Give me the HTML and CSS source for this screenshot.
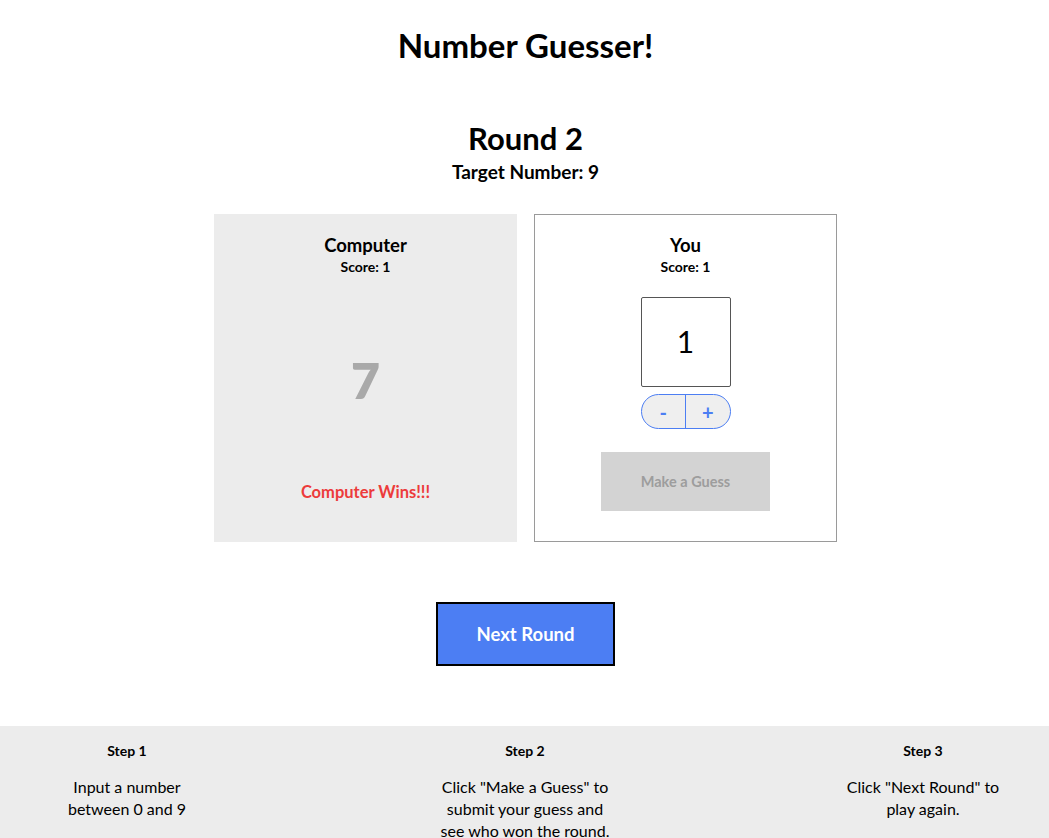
FILE: index.html
```html
<!DOCTYPE html>
<html lang="en">
<head>
<meta charset="utf-8">
<title>Number Guesser!</title>
<link rel="stylesheet" href="styles.css">
</head>
<body>
  <header class="site-header">
    <h1 class="title">Number Guesser!</h1>
  </header>
  <main class="game">
    <h2 class="round">Round 2</h2>
    <p class="target">Target Number: 9</p>
    <div class="cards">
      <section class="card card-computer">
        <h3 class="player">Computer</h3>
        <p class="score">Score: 1</p>
        <div class="computer-guess">7</div>
        <p class="result">Computer Wins!!!</p>
      </section>
      <section class="card card-human">
        <h3 class="player">You</h3>
        <p class="score">Score: 1</p>
        <input class="guess-input" type="text" value="1">
        <div class="stepper">
          <button class="stepper-btn">-</button>
          <button class="stepper-btn">+</button>
        </div>
        <button class="guess-btn" disabled>Make a Guess</button>
      </section>
    </div>
    <button class="next-btn">Next Round</button>
  </main>
  <footer class="steps">
    <div class="step">
      <h4 class="step-title">Step 1</h4>
      <p class="step-text">Input a number between 0 and 9</p>
    </div>
    <div class="step">
      <h4 class="step-title">Step 2</h4>
      <p class="step-text">Click "Make a Guess" to submit your guess and see who won the round.</p>
    </div>
    <div class="step">
      <h4 class="step-title">Step 3</h4>
      <p class="step-text">Click "Next Round" to play again.</p>
    </div>
  </footer>
</body>
</html>
```
FILE: styles.css
```css
* { box-sizing: border-box; }
body {
  margin: 0;
  font-family: Lato, "Noto Sans", sans-serif;
  color: #000;
  background: #fff;
}
.site-header { text-align: center; padding: 25px 0 0 2px; }
.title { margin: 0; font-size: 33px; line-height: 40px; font-weight: 700; }
.game { display: flex; flex-direction: column; align-items: center; padding-left: 2px; }
.round { margin: 55px 0 0; font-size: 31px; line-height: 36px; font-weight: 700; }
.target { margin: 4px 0 0; font-size: 19px; line-height: 24px; font-weight: 700; }
.cards { display: flex; gap: 17px; margin-top: 30px; }
.card {
  width: 303px;
  height: 328px;
  padding-top: 20px;
  display: flex;
  flex-direction: column;
  align-items: center;
}
.card-computer { background: #ececec; }
.card-human { background: #fff; border: 1px solid #9a9a9a; padding-top: 19px; }
.player { margin: 0; font-size: 18.5px; line-height: 22px; font-weight: 700; }
.score { margin: 3px 0 0; font-size: 14px; line-height: 16px; font-weight: 700; }
.computer-guess { margin-top: 75px; font-size: 50px; line-height: 60px; font-weight: 800; color: #a9a9a9; }
.result { margin: 72px 0 0; font-size: 16.5px; line-height: 20px; font-weight: 700; color: #ec3b3b; }
.guess-input {
  margin-top: 22px;
  width: 90px;
  height: 90px;
  border: 1px solid #555;
  border-radius: 2px;
  text-align: center;
  font-family: inherit;
  font-size: 30px;
  color: #000;
  padding: 0 0 3px;
  outline: none;
}
.stepper {
  margin-top: 7px;
  display: flex;
  width: 90px;
  height: 35px;
  border: 1px solid #4c7ef3;
  border-radius: 18px;
  overflow: hidden;
  background: #efefef;
}
.stepper-btn {
  flex: 1;
  border: none;
  background: transparent;
  color: #4c7ef3;
  font-family: inherit;
  font-size: 20px;
  font-weight: 700;
  padding: 0;
  line-height: 1;
}
.stepper-btn + .stepper-btn { border-left: 1px solid #4c7ef3; }
.guess-btn {
  margin-top: 23px;
  width: 169px;
  height: 59px;
  border: none;
  background: #d3d3d3;
  color: #9d9d9d;
  font-family: inherit;
  font-size: 14.5px;
  font-weight: 700;
}
.next-btn {
  margin-top: 60px;
  width: 179px;
  height: 64px;
  border: 2px solid #000;
  background: #4c7ef3;
  color: #fff;
  font-family: inherit;
  font-size: 18.5px;
  font-weight: 700;
}
.steps {
  margin-top: 60px;
  background: #ececec;
  display: flex;
  justify-content: space-between;
  padding: 16px 36px 30px 37px;
}
.step { width: 180px; text-align: center; }
.step-title { margin: 0; font-size: 14px; line-height: 18px; font-weight: 700; }
.step-text { margin: 16px auto 0; width: 170px; font-size: 16px; line-height: 22px; }
```
